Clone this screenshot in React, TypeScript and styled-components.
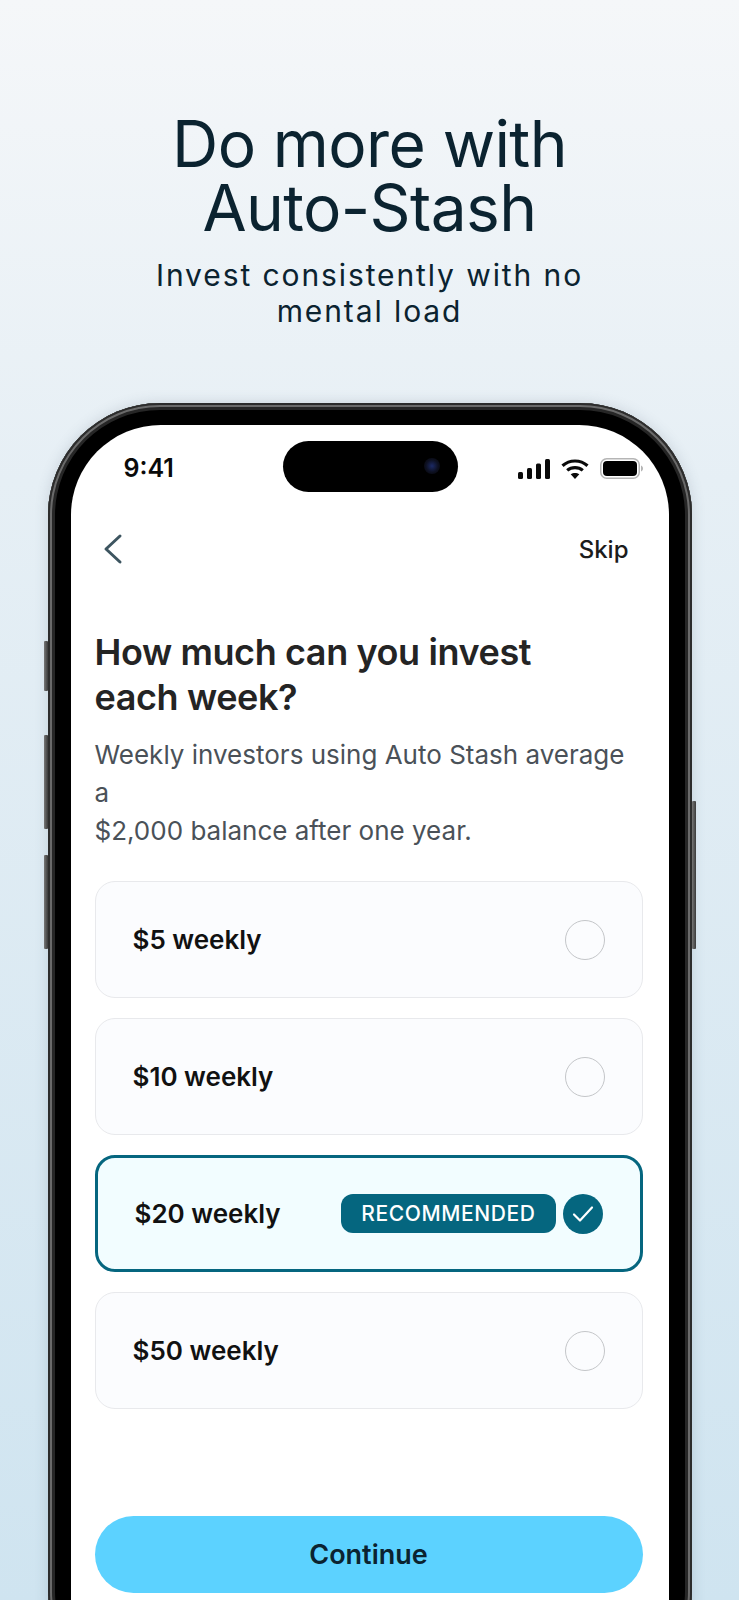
import styled, { createGlobalStyle } from "styled-components";

const GlobalStyle = createGlobalStyle`
  html, body {
    margin: 0;
    padding: 0;
  }
  body {
    font-family: "Inter", "Liberation Sans", sans-serif;
  }
`;

const Page = styled.div`
  width: 739px;
  height: 1600px;
  overflow: hidden;
  background: linear-gradient(180deg, #f5f7f9 0%, #e6eff5 30%, #cfe4f0 100%);
  display: flex;
  flex-direction: column;
  align-items: center;
`;

const Title = styled.h1`
  margin: 112px 0 0;
  font-size: 64px;
  line-height: 64px;
  font-weight: 400;
  letter-spacing: -0.6px;
  color: #0b2330;
  text-align: center;
`;

const Subtitle = styled.p`
  margin: 17px 0 0;
  width: 480px;
  font-size: 30px;
  line-height: 36px;
  font-weight: 400;
  letter-spacing: 1.9px;
  color: #0b2330;
  text-align: center;
`;

const Phone = styled.div`
  position: relative;
  flex: none;
  margin-top: 74px;
  width: 644px;
  height: 1300px;
  box-sizing: border-box;
  padding: 22px 23px 0;
  border-radius: 112px;
  background: #000;
  box-shadow:
    inset 0 0 0 2px #2c2c2c,
    inset 0 0 0 4px #6a6a6a,
    inset 0 0 0 7px #262626,
    0 0 14px rgba(60, 80, 100, 0.18);
`;

const SideButton = styled.span<{ $side: "left" | "right"; $top: number; $height: number }>`
  position: absolute;
  top: ${(props) => props.$top}px;
  ${(props) => props.$side}: -4px;
  width: 4px;
  height: ${(props) => props.$height}px;
  background: linear-gradient(90deg, #777 0%, #3a3a3a 100%);
  border-radius: 1px;
`;

const Screen = styled.div`
  position: relative;
  height: 100%;
  background: #fff;
  border-radius: 90px;
  padding: 0 26px 0 24px;
  box-sizing: border-box;
`;

const StatusBar = styled.div`
  height: 74px;
  padding: 28px 0 0 29px;
  box-sizing: border-box;
  display: flex;
  align-items: flex-start;
  justify-content: space-between;
`;

const Clock = styled.span`
  font-size: 25px;
  line-height: 30px;
  font-weight: 600;
  color: #0a0a0a;
`;

const Island = styled.div`
  position: absolute;
  top: 16px;
  left: 212px;
  width: 175px;
  height: 51px;
  border-radius: 26px;
  background: #000;
`;

const Lens = styled.span`
  position: absolute;
  top: 17px;
  right: 18px;
  width: 16px;
  height: 16px;
  border-radius: 50%;
  background: radial-gradient(circle, #1c2a66 0%, #0d1020 55%, #050508 100%);
`;

const StatusIcons = styled.div`
  display: flex;
  align-items: center;
  gap: 11px;
  margin: 5px 0 0;
`;

const Nav = styled.div`
  margin-top: 24px;
  height: 52px;
  display: flex;
  align-items: center;
  justify-content: space-between;
  padding: 0 14px 0 8px;
`;

const SkipLabel = styled.span`
  font-size: 24px;
  font-weight: 500;
  color: #1c1c1c;
`;

const Question = styled.h2`
  margin: 55px 0 0;
  font-size: 36px;
  line-height: 45px;
  font-weight: 600;
  letter-spacing: -0.4px;
  color: #242424;
`;

const Lead = styled.p`
  margin: 16px 0 0;
  font-size: 26px;
  line-height: 38px;
  font-weight: 400;
  color: #4a5158;
`;

const OptionList = styled.div`
  margin-top: 31px;
  display: flex;
  flex-direction: column;
  gap: 20px;
`;

const Option = styled.div<{ $selected?: boolean }>`
  height: 117px;
  box-sizing: border-box;
  display: flex;
  align-items: center;
  justify-content: space-between;
  padding: 0 37px;
  border-radius: 20px;
  background: ${(props) => (props.$selected ? "#f2fdff" : "#fbfcfe")};
  border: ${(props) => (props.$selected ? "3px solid #05667f" : "1.5px solid #e8e9ec")};
`;

const OptionLabel = styled.span`
  font-size: 26px;
  font-weight: 600;
  color: #111;
`;

const OptionRight = styled.div`
  display: flex;
  align-items: center;
  gap: 7px;
`;

const Pill = styled.span`
  height: 39px;
  padding: 0 20px;
  display: flex;
  align-items: center;
  border-radius: 12px;
  background: #05667f;
  color: #fff;
  font-size: 21px;
  font-weight: 500;
  letter-spacing: 0.6px;
`;

const Radio = styled.span`
  width: 40px;
  height: 40px;
  box-sizing: border-box;
  border-radius: 50%;
  border: 1.5px solid #c4c6c9;
`;

const CheckMark = styled.span`
  width: 40px;
  height: 40px;
  border-radius: 50%;
  background: #05667f;
  display: flex;
  align-items: center;
  justify-content: center;
`;

const ContinueButton = styled.button`
  display: block;
  width: 100%;
  margin-top: 107px;
  height: 77px;
  border: none;
  border-radius: 39px;
  background: #5cd2ff;
  color: #0b2330;
  font-family: inherit;
  font-size: 27px;
  font-weight: 600;
`;

const options = [
  { label: "$5 weekly" },
  { label: "$10 weekly" },
  { label: "$20 weekly", selected: true },
  { label: "$50 weekly" },
];

function StatusGlyphs() {
  return (
    <StatusIcons>
      <svg width="32" height="20" viewBox="0 0 32 20" fill="#0a0a0a">
        <rect x="0" y="13" width="5" height="7" rx="1.5" />
        <rect x="9" y="9" width="5" height="11" rx="1.5" />
        <rect x="18" y="4.5" width="5" height="15.5" rx="1.5" />
        <rect x="27" y="0" width="5" height="20" rx="1.5" />
      </svg>
      <svg width="28" height="20" viewBox="0 0 28 20" fill="none" stroke="#0a0a0a" strokeWidth="3.2">
        <path d="M1.5 6.8C8.6 0.4 19.4 0.4 26.5 6.8" />
        <path d="M6.2 11.4C10.7 7.6 17.3 7.6 21.8 11.4" />
        <path d="M14 20l-4.3-4.7c2.5-1.9 6.1-1.9 8.6 0z" fill="#0a0a0a" stroke="none" />
      </svg>
      <svg width="43" height="21" viewBox="0 0 43 21">
        <rect x="0.75" y="0.75" width="38.5" height="19.5" rx="6" fill="none" stroke="#b5b5b5" strokeWidth="1.5" />
        <rect x="3" y="3" width="34" height="15" rx="4" fill="#000" />
        <path d="M41 7.5c1.3.5 2 1.6 2 3s-.7 2.5-2 3z" fill="#b5b5b5" />
      </svg>
    </StatusIcons>
  );
}

export default function App() {
  return (
    <Page>
      <GlobalStyle />
      <Title>
        Do more with
        <br />
        Auto-Stash
      </Title>
      <Subtitle>Invest consistently with no mental load</Subtitle>
      <Phone>
        <SideButton $side="left" $top={238} $height={50} />
        <SideButton $side="left" $top={332} $height={94} />
        <SideButton $side="left" $top={452} $height={94} />
        <SideButton $side="right" $top={398} $height={148} />
        <Screen>
          <StatusBar>
            <Clock>9:41</Clock>
            <StatusGlyphs />
          </StatusBar>
          <Island>
            <Lens />
          </Island>
          <Nav>
            <svg width="20" height="32" viewBox="0 0 20 32" fill="none" stroke="#3d5560" strokeWidth="3" strokeLinecap="round" strokeLinejoin="round">
              <path d="M17 3L3 16l14 13" />
            </svg>
            <SkipLabel>Skip</SkipLabel>
          </Nav>
          <Question>
            How much can you invest
            <br />
            each week?
          </Question>
          <Lead>
            Weekly investors using Auto Stash average a
            <br />
            $2,000 balance after one year.
          </Lead>
          <OptionList>
            {options.map((option) => (
              <Option key={option.label} $selected={option.selected}>
                <OptionLabel>{option.label}</OptionLabel>
                {option.selected ? (
                  <OptionRight>
                    <Pill>RECOMMENDED</Pill>
                    <CheckMark>
                      <svg width="22" height="18" viewBox="0 0 22 18" fill="none" stroke="#fff" strokeWidth="2.2" strokeLinecap="round" strokeLinejoin="round">
                        <path d="M2 9.5l6 6L20 2.5" />
                      </svg>
                    </CheckMark>
                  </OptionRight>
                ) : (
                  <Radio />
                )}
              </Option>
            ))}
          </OptionList>
          <ContinueButton>Continue</ContinueButton>
        </Screen>
      </Phone>
    </Page>
  );
}
